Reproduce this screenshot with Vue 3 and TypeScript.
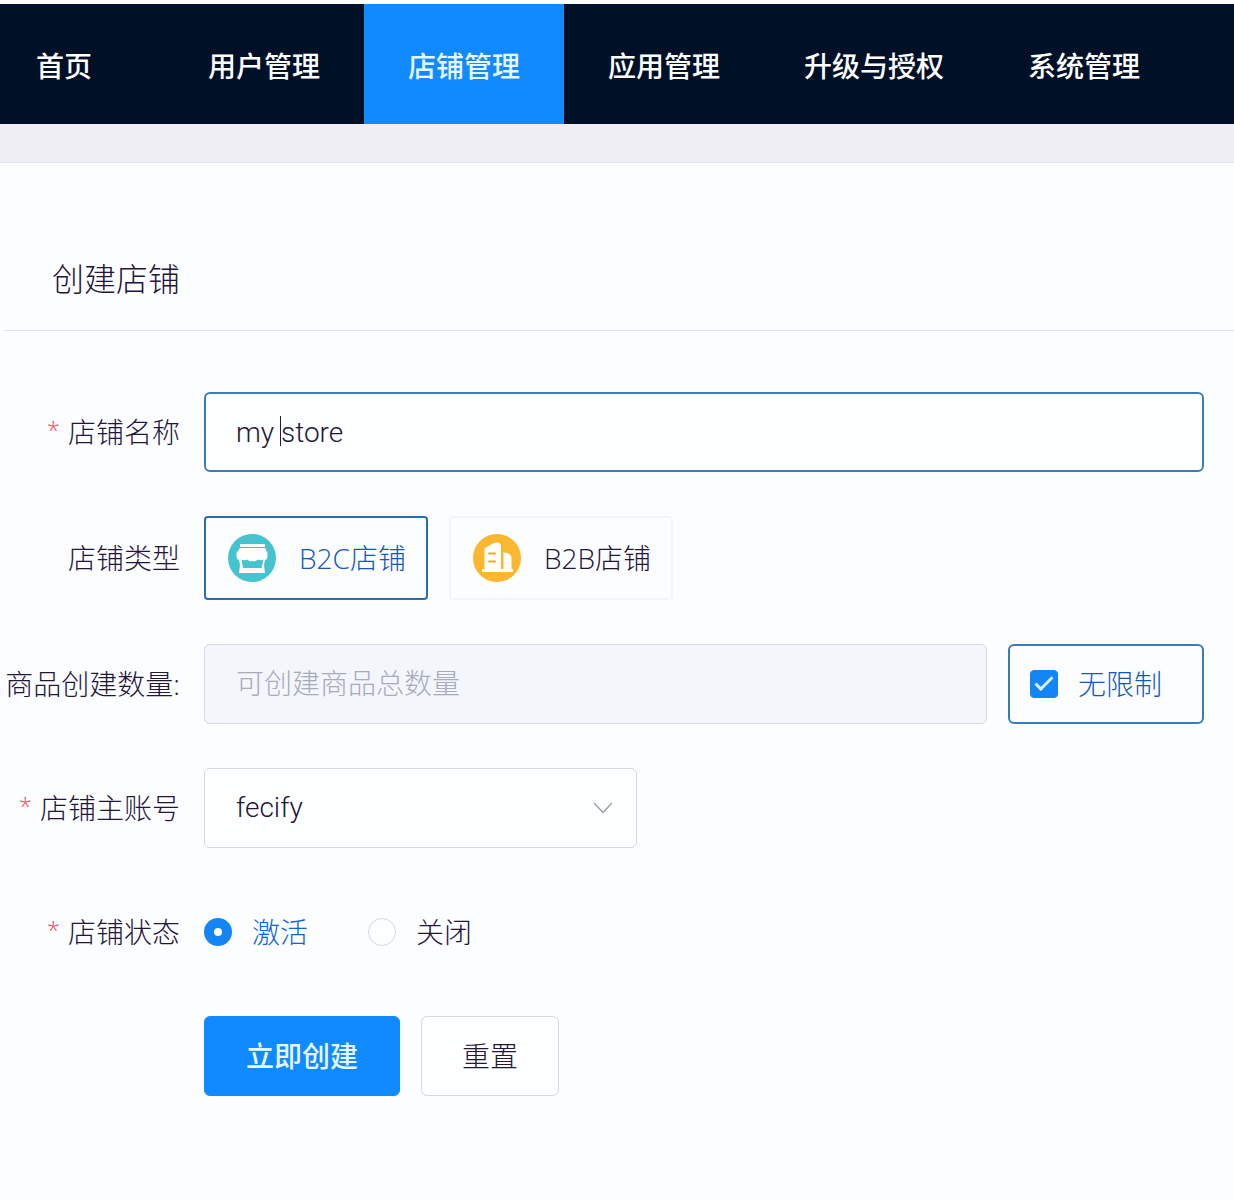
<script setup lang="ts">
import { ref } from 'vue'

interface NavItem {
  label: string
  active?: boolean
}

const navItems: NavItem[] = [
  { label: '首页' },
  { label: '用户管理' },
  { label: '店铺管理', active: true },
  { label: '应用管理' },
  { label: '升级与授权' },
  { label: '系统管理' },
]

const storeName = ref('my store')
const storeType = ref<'b2c' | 'b2b'>('b2c')
const productLimit = ref('')
const unlimited = ref(true)
const account = ref('fecify')
const status = ref<'on' | 'off'>('on')

function reset(): void {
  storeName.value = ''
  storeType.value = 'b2c'
  productLimit.value = ''
  unlimited.value = true
  status.value = 'on'
}
</script>

<template>
  <div class="page">
    <nav class="nav">
      <a
        v-for="item in navItems"
        :key="item.label"
        href="#"
        class="nav-item"
        :class="{ active: item.active }"
      >{{ item.label }}</a>
    </nav>
    <div class="strip"></div>

    <main>
      <header class="heading">
        <h1>创建店铺</h1>
      </header>

      <form class="form" @submit.prevent>
        <div class="row">
          <label class="label" for="store-name"><span class="star">*</span>店铺名称</label>
          <div class="field name-field">
            <input id="store-name" v-model="storeName" class="box focused" type="text" />
            <span class="caret"></span>
          </div>
        </div>

        <div class="row" role="radiogroup" aria-labelledby="type-label">
          <span id="type-label" class="label">店铺类型</span>
          <div class="field types">
            <label class="type" :class="{ selected: storeType === 'b2c' }">
              <input v-model="storeType" class="hidden-input" type="radio" name="type" value="b2c" />
              <svg class="type-icon" viewBox="0 0 48 48" aria-hidden="true">
                <circle cx="24" cy="24" r="24" fill="#45c4cf" />
                <path d="M12 10h25v3H12z" fill="#fff" />
                <path d="M12 14h25l2.500 5v3.500q0 3-2.500 3.500l-1 5 1 8H11l1-8-1-5q-2.500-1-2.500-3.500V19z" fill="#fff" />
                <path d="M13.500 25.500q3 1.500 5.500 0 2.500 2.500 5.500 1.500 3 1 5.500-1.500 3 1.500 5.500 0l-2 8.500H15z" fill="#45c4cf" />
              </svg>
              <span>B2C店铺</span>
            </label>
            <label class="type" :class="{ selected: storeType === 'b2b' }">
              <input v-model="storeType" class="hidden-input" type="radio" name="type" value="b2b" />
              <svg class="type-icon" viewBox="0 0 48 48" aria-hidden="true">
                <circle cx="24" cy="24" r="24" fill="#fcb62f" />
                <path d="M11.500 36V14.500L19 10q9-4 9 3v23z" fill="#fff" />
                <path d="M30.500 36V18.500q8 0 8 6V36z" fill="#fff" />
                <path d="M9 35h31v3H9z" fill="#fff" />
                <path d="M16 19.500h6M16 27.500h6" stroke="#fca62f" stroke-width="2" stroke-linecap="round" />
              </svg>
              <span>B2B店铺</span>
            </label>
          </div>
        </div>

        <div class="row">
          <label class="label" for="limit">商品创建数量:</label>
          <div class="field limit">
            <input
              id="limit"
              v-model="productLimit"
              class="box"
              type="text"
              placeholder="可创建商品总数量"
              :disabled="unlimited"
            />
            <label class="unlimited">
              <input v-model="unlimited" class="check" type="checkbox" />
              <span>无限制</span>
            </label>
          </div>
        </div>

        <div class="row">
          <label class="label" for="account"><span class="star">*</span>店铺主账号</label>
          <div class="field select-wrap">
            <select id="account" v-model="account" class="box">
              <option value="fecify">fecify</option>
            </select>
            <svg class="chevron" viewBox="0 0 20 12" aria-hidden="true">
              <path d="M1 1l9 9.500L19 1" fill="none" stroke="#9a9aa6" stroke-width="1.300" />
            </svg>
          </div>
        </div>

        <div class="row" role="radiogroup" aria-labelledby="status-label">
          <span id="status-label" class="label"><span class="star">*</span>店铺状态</span>
          <div class="field statuses">
            <label class="status" :class="{ selected: status === 'on' }">
              <input v-model="status" class="radio" type="radio" name="status" value="on" />
              <span>激活</span>
            </label>
            <label class="status" :class="{ selected: status === 'off' }">
              <input v-model="status" class="radio" type="radio" name="status" value="off" />
              <span>关闭</span>
            </label>
          </div>
        </div>

        <div class="row actions">
          <button class="btn primary" type="submit">立即创建</button>
          <button class="btn" type="button" @click="reset">重置</button>
        </div>
      </form>
    </main>
  </div>
</template>

<style>
body {
  margin: 0;
  background: #fcfdff;
}
</style>

<style scoped>
.page {
  box-sizing: border-box;
  min-height: 100vh;
  padding-top: 4px;
  background: #fcfdff;
  color: #241638;
  font: 300 28px/40px "Open Sans", "Noto Sans CJK SC", sans-serif;
}

.page *,
.page *::before {
  box-sizing: border-box;
}

.nav {
  display: flex;
  height: 120px;
  background: #001027;
}

.nav-item {
  display: flex;
  align-items: center;
  justify-content: center;
  min-width: 200px;
  padding: 4px 40px 0;
  color: #fff;
  font-weight: 500;
  text-decoration: none;
  white-space: nowrap;
}

.nav-item:first-child {
  min-width: 164px;
  padding-left: 36px;
  justify-content: flex-start;
}

.nav-item.active {
  background: #118aff;
  color: #e6f7ff;
}

.strip {
  height: 39px;
  background: #efeef4;
  border-bottom: 1px solid #e2e3ec;
}

.heading {
  margin-left: 4px;
  padding: 92px 48px 27px;
  border-bottom: 1px solid #dfe2ea;
}

h1 {
  margin: 0;
  font-size: 32px;
  font-weight: 300;
  line-height: 48px;
}

.form {
  display: flex;
  flex-direction: column;
  gap: 44px;
  padding: 61px 30px 103px 0;
}

.row {
  display: flex;
  align-items: center;
  gap: 24px;
  min-height: 80px;
}

.label {
  flex: none;
  width: 180px;
  text-align: right;
  white-space: nowrap;
}

.star {
  margin-right: 8px;
  color: #ee4c5c;
  font-size: 24px;
  line-height: 24px;
  vertical-align: 4px;
}

.field {
  position: relative;
  flex: 1;
  min-width: 0;
}

.box {
  display: block;
  width: 100%;
  height: 80px;
  margin: 0;
  padding: 0 31px;
  border: 1px solid #d5d8e0;
  border-radius: 6px;
  outline: none;
  background: #fdfeff;
  color: inherit;
  font: 300 28px/40px Roboto, "Noto Sans CJK SC", sans-serif;
  appearance: none;
}

.box.focused {
  border: 2px solid #3b7cb8;
  padding: 0 30px;
}

.box:disabled {
  background: #f3f6fb;
}

.box::placeholder {
  color: #a9abbb;
  opacity: 1;
}

.caret {
  position: absolute;
  top: 24px;
  left: 76px;
  width: 1px;
  height: 30px;
  background: #241638;
}

.types {
  display: flex;
  gap: 21px;
}

.type {
  display: flex;
  align-items: center;
  gap: 23px;
  height: 84px;
  padding: 0 20px 0 22px;
  border: 2px solid #f3f5fa;
  border-radius: 4px;
}

.type.selected {
  border-color: #2b6bb0;
  color: #1557bd;
}

.type-icon {
  width: 48px;
  height: 48px;
}

.hidden-input {
  position: absolute;
  opacity: 0;
}

.limit {
  display: flex;
  gap: 21px;
}

.limit .box {
  flex: 1;
  min-width: 0;
}

.unlimited {
  display: flex;
  flex: none;
  align-items: center;
  gap: 20px;
  height: 80px;
  padding: 0 40px 0 20px;
  border: 2px solid #3b7cb8;
  border-radius: 6px;
  color: #1557bd;
}

.check {
  display: grid;
  place-items: center;
  width: 28px;
  height: 28px;
  margin: 0;
  border: 1px solid #c9ccd6;
  border-radius: 4px;
  appearance: none;
}

.check:checked {
  border-color: #1485f5;
  background: #1485f5;
}

.check:checked::before {
  width: 18px;
  height: 9px;
  margin-bottom: 6px;
  border: solid #d8f2ff;
  border-width: 0 0 3px 3px;
  content: "";
  transform: rotate(-45deg);
}

.select-wrap {
  flex: 0 1 433px;
}

.chevron {
  position: absolute;
  top: 34px;
  right: 24px;
  width: 20px;
  height: 12px;
  pointer-events: none;
}

.statuses {
  display: flex;
  gap: 60px;
}

.status {
  display: flex;
  align-items: center;
  gap: 20px;
}

.status.selected {
  color: #1264d2;
}

.radio {
  width: 28px;
  height: 28px;
  margin: 0;
  border: 1px solid #d5d8e0;
  border-radius: 50%;
  background: #fdfeff;
  appearance: none;
}

.radio:checked {
  border: 10px solid #1485f5;
}

.actions {
  gap: 21px;
  padding-left: 204px;
}

.btn {
  height: 80px;
  padding: 0 40px;
  border: 1px solid #d5d8e0;
  border-radius: 6px;
  background: #fdfeff;
  color: inherit;
  font: inherit;
}

.btn.primary {
  padding: 0 41px;
  border-color: #118aff;
  background: #118aff;
  color: #e6f7ff;
  font-weight: 500;
}
</style>
